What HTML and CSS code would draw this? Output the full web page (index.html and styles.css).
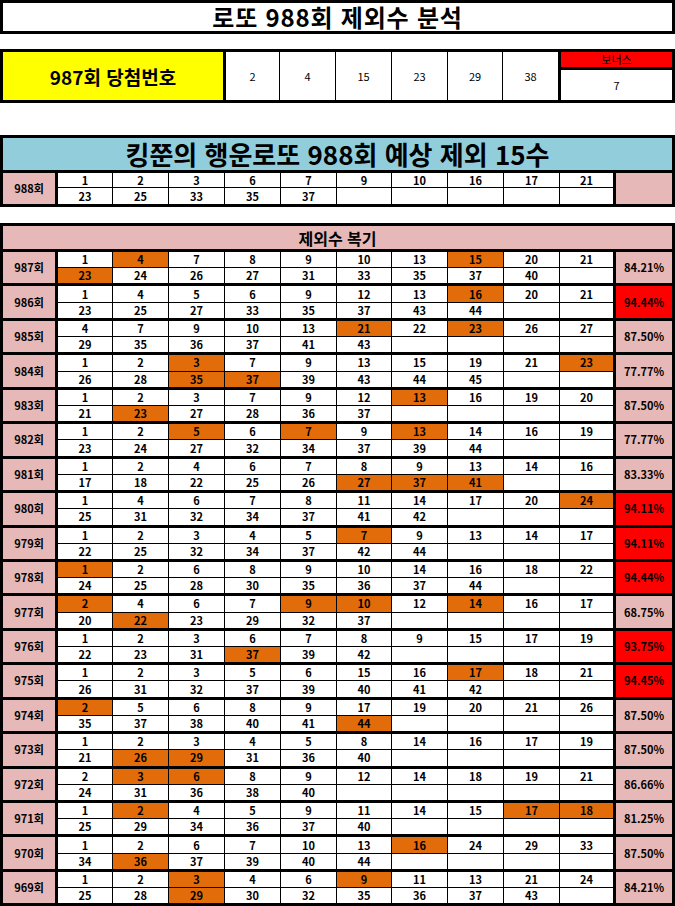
FILE: index.html
```html
<!DOCTYPE html>
<html lang="ko">
<head>
<meta charset="utf-8">
<title>로또 988회 제외수 분석</title>
<link rel="stylesheet" href="styles.css">
</head>
<body>
<div class="page">
  <div class="title">로또 988회 제외수 분석</div>

  <div class="win">
    <div class="win-label">987회 당첨번호</div>
    <div class="win-n first">2</div>
    <div class="win-n">4</div>
    <div class="win-n">15</div>
    <div class="win-n">23</div>
    <div class="win-n">29</div>
    <div class="win-n">38</div>
    <div class="bonus">
      <div class="bonus-h">보너스</div>
      <div class="bonus-v">7</div>
    </div>
  </div>

  <div class="sec">
    <div class="sec-h blue">킹쭌의 행운로또 988회 예상 제외 15수</div>
    <div class="blk b988">
      <div class="lbl">988회</div>
      <div class="n">1</div><div class="n">2</div><div class="n">3</div><div class="n">6</div><div class="n">7</div><div class="n">9</div><div class="n">10</div><div class="n">16</div><div class="n">17</div><div class="n">21</div>
      <div class="pct"></div>
      <div class="n">23</div><div class="n">25</div><div class="n">33</div><div class="n">35</div><div class="n">37</div><div class="n"></div><div class="n"></div><div class="n"></div><div class="n"></div><div class="n"></div>
    </div>
  </div>

  <div class="sec sec2">
    <div class="sec-h pink">제외수 복기</div>

    <div class="blk">
      <div class="lbl">987회</div>
      <div class="n">1</div><div class="n o">4</div><div class="n">7</div><div class="n">8</div><div class="n">9</div><div class="n">10</div><div class="n">13</div><div class="n o">15</div><div class="n">20</div><div class="n">21</div>
      <div class="pct">84.21%</div>
      <div class="n o">23</div><div class="n">24</div><div class="n">26</div><div class="n">27</div><div class="n">31</div><div class="n">33</div><div class="n">35</div><div class="n">37</div><div class="n">40</div><div class="n"></div>
    </div>

    <div class="blk">
      <div class="lbl">986회</div>
      <div class="n">1</div><div class="n">4</div><div class="n">5</div><div class="n">6</div><div class="n">9</div><div class="n">12</div><div class="n">13</div><div class="n o">16</div><div class="n">20</div><div class="n">21</div>
      <div class="pct red">94.44%</div>
      <div class="n">23</div><div class="n">25</div><div class="n">27</div><div class="n">33</div><div class="n">35</div><div class="n">37</div><div class="n">43</div><div class="n">44</div><div class="n"></div><div class="n"></div>
    </div>

    <div class="blk">
      <div class="lbl">985회</div>
      <div class="n">4</div><div class="n">7</div><div class="n">9</div><div class="n">10</div><div class="n">13</div><div class="n o">21</div><div class="n">22</div><div class="n o">23</div><div class="n">26</div><div class="n">27</div>
      <div class="pct">87.50%</div>
      <div class="n">29</div><div class="n">35</div><div class="n">36</div><div class="n">37</div><div class="n">41</div><div class="n">43</div><div class="n"></div><div class="n"></div><div class="n"></div><div class="n"></div>
    </div>

    <div class="blk">
      <div class="lbl">984회</div>
      <div class="n">1</div><div class="n">2</div><div class="n o">3</div><div class="n">7</div><div class="n">9</div><div class="n">13</div><div class="n">15</div><div class="n">19</div><div class="n">21</div><div class="n o">23</div>
      <div class="pct">77.77%</div>
      <div class="n">26</div><div class="n">28</div><div class="n o">35</div><div class="n o">37</div><div class="n">39</div><div class="n">43</div><div class="n">44</div><div class="n">45</div><div class="n"></div><div class="n"></div>
    </div>

    <div class="blk">
      <div class="lbl">983회</div>
      <div class="n">1</div><div class="n">2</div><div class="n">3</div><div class="n">7</div><div class="n">9</div><div class="n">12</div><div class="n o">13</div><div class="n">16</div><div class="n">19</div><div class="n">20</div>
      <div class="pct">87.50%</div>
      <div class="n">21</div><div class="n o">23</div><div class="n">27</div><div class="n">28</div><div class="n">36</div><div class="n">37</div><div class="n"></div><div class="n"></div><div class="n"></div><div class="n"></div>
    </div>

    <div class="blk">
      <div class="lbl">982회</div>
      <div class="n">1</div><div class="n">2</div><div class="n o">5</div><div class="n">6</div><div class="n o">7</div><div class="n">9</div><div class="n o">13</div><div class="n">14</div><div class="n">16</div><div class="n">19</div>
      <div class="pct">77.77%</div>
      <div class="n">23</div><div class="n">24</div><div class="n">27</div><div class="n">32</div><div class="n">34</div><div class="n">37</div><div class="n">39</div><div class="n">44</div><div class="n"></div><div class="n"></div>
    </div>

    <div class="blk">
      <div class="lbl">981회</div>
      <div class="n">1</div><div class="n">2</div><div class="n">4</div><div class="n">6</div><div class="n">7</div><div class="n">8</div><div class="n">9</div><div class="n">13</div><div class="n">14</div><div class="n">16</div>
      <div class="pct">83.33%</div>
      <div class="n">17</div><div class="n">18</div><div class="n">22</div><div class="n">25</div><div class="n">26</div><div class="n o">27</div><div class="n o">37</div><div class="n o">41</div><div class="n"></div><div class="n"></div>
    </div>

    <div class="blk">
      <div class="lbl">980회</div>
      <div class="n">1</div><div class="n">4</div><div class="n">6</div><div class="n">7</div><div class="n">8</div><div class="n">11</div><div class="n">14</div><div class="n">17</div><div class="n">20</div><div class="n o">24</div>
      <div class="pct red">94.11%</div>
      <div class="n">25</div><div class="n">31</div><div class="n">32</div><div class="n">34</div><div class="n">37</div><div class="n">41</div><div class="n">42</div><div class="n"></div><div class="n"></div><div class="n"></div>
    </div>

    <div class="blk">
      <div class="lbl">979회</div>
      <div class="n">1</div><div class="n">2</div><div class="n">3</div><div class="n">4</div><div class="n">5</div><div class="n o">7</div><div class="n">9</div><div class="n">13</div><div class="n">14</div><div class="n">17</div>
      <div class="pct red">94.11%</div>
      <div class="n">22</div><div class="n">25</div><div class="n">32</div><div class="n">34</div><div class="n">37</div><div class="n">42</div><div class="n">44</div><div class="n"></div><div class="n"></div><div class="n"></div>
    </div>

    <div class="blk">
      <div class="lbl">978회</div>
      <div class="n o">1</div><div class="n">2</div><div class="n">6</div><div class="n">8</div><div class="n">9</div><div class="n">10</div><div class="n">14</div><div class="n">16</div><div class="n">18</div><div class="n">22</div>
      <div class="pct red">94.44%</div>
      <div class="n">24</div><div class="n">25</div><div class="n">28</div><div class="n">30</div><div class="n">35</div><div class="n">36</div><div class="n">37</div><div class="n">44</div><div class="n"></div><div class="n"></div>
    </div>

    <div class="blk">
      <div class="lbl">977회</div>
      <div class="n o">2</div><div class="n">4</div><div class="n">6</div><div class="n">7</div><div class="n o">9</div><div class="n o">10</div><div class="n">12</div><div class="n o">14</div><div class="n">16</div><div class="n">17</div>
      <div class="pct">68.75%</div>
      <div class="n">20</div><div class="n o">22</div><div class="n">23</div><div class="n">29</div><div class="n">32</div><div class="n">37</div><div class="n"></div><div class="n"></div><div class="n"></div><div class="n"></div>
    </div>

    <div class="blk">
      <div class="lbl">976회</div>
      <div class="n">1</div><div class="n">2</div><div class="n">3</div><div class="n">6</div><div class="n">7</div><div class="n">8</div><div class="n">9</div><div class="n">15</div><div class="n">17</div><div class="n">19</div>
      <div class="pct red">93.75%</div>
      <div class="n">22</div><div class="n">23</div><div class="n">31</div><div class="n o">37</div><div class="n">39</div><div class="n">42</div><div class="n"></div><div class="n"></div><div class="n"></div><div class="n"></div>
    </div>

    <div class="blk">
      <div class="lbl">975회</div>
      <div class="n">1</div><div class="n">2</div><div class="n">3</div><div class="n">5</div><div class="n">6</div><div class="n">15</div><div class="n">16</div><div class="n o">17</div><div class="n">18</div><div class="n">21</div>
      <div class="pct red">94.45%</div>
      <div class="n">26</div><div class="n">31</div><div class="n">32</div><div class="n">37</div><div class="n">39</div><div class="n">40</div><div class="n">41</div><div class="n">42</div><div class="n"></div><div class="n"></div>
    </div>

    <div class="blk">
      <div class="lbl">974회</div>
      <div class="n o">2</div><div class="n">5</div><div class="n">6</div><div class="n">8</div><div class="n">9</div><div class="n">17</div><div class="n">19</div><div class="n">20</div><div class="n">21</div><div class="n">26</div>
      <div class="pct">87.50%</div>
      <div class="n">35</div><div class="n">37</div><div class="n">38</div><div class="n">40</div><div class="n">41</div><div class="n o">44</div><div class="n"></div><div class="n"></div><div class="n"></div><div class="n"></div>
    </div>

    <div class="blk">
      <div class="lbl">973회</div>
      <div class="n">1</div><div class="n">2</div><div class="n">3</div><div class="n">4</div><div class="n">5</div><div class="n">8</div><div class="n">14</div><div class="n">16</div><div class="n">17</div><div class="n">19</div>
      <div class="pct">87.50%</div>
      <div class="n">21</div><div class="n o">26</div><div class="n o">29</div><div class="n">31</div><div class="n">36</div><div class="n">40</div><div class="n"></div><div class="n"></div><div class="n"></div><div class="n"></div>
    </div>

    <div class="blk">
      <div class="lbl">972회</div>
      <div class="n">2</div><div class="n o">3</div><div class="n o">6</div><div class="n">8</div><div class="n">9</div><div class="n">12</div><div class="n">14</div><div class="n">18</div><div class="n">19</div><div class="n">21</div>
      <div class="pct">86.66%</div>
      <div class="n">24</div><div class="n">31</div><div class="n">36</div><div class="n">38</div><div class="n">40</div><div class="n"></div><div class="n"></div><div class="n"></div><div class="n"></div><div class="n"></div>
    </div>

    <div class="blk">
      <div class="lbl">971회</div>
      <div class="n">1</div><div class="n o">2</div><div class="n">4</div><div class="n">5</div><div class="n">9</div><div class="n">11</div><div class="n">14</div><div class="n">15</div><div class="n o">17</div><div class="n o">18</div>
      <div class="pct">81.25%</div>
      <div class="n">25</div><div class="n">29</div><div class="n">34</div><div class="n">36</div><div class="n">37</div><div class="n">40</div><div class="n"></div><div class="n"></div><div class="n"></div><div class="n"></div>
    </div>

    <div class="blk">
      <div class="lbl">970회</div>
      <div class="n">1</div><div class="n">2</div><div class="n">6</div><div class="n">7</div><div class="n">10</div><div class="n">13</div><div class="n o">16</div><div class="n">24</div><div class="n">29</div><div class="n">33</div>
      <div class="pct">87.50%</div>
      <div class="n">34</div><div class="n o">36</div><div class="n">37</div><div class="n">39</div><div class="n">40</div><div class="n">44</div><div class="n"></div><div class="n"></div><div class="n"></div><div class="n"></div>
    </div>

    <div class="blk">
      <div class="lbl">969회</div>
      <div class="n">1</div><div class="n">2</div><div class="n o">3</div><div class="n">4</div><div class="n">6</div><div class="n o">9</div><div class="n">11</div><div class="n">13</div><div class="n">21</div><div class="n">24</div>
      <div class="pct">84.21%</div>
      <div class="n">25</div><div class="n">28</div><div class="n o">29</div><div class="n">30</div><div class="n">32</div><div class="n">35</div><div class="n">36</div><div class="n">37</div><div class="n">43</div><div class="n"></div>
    </div>
  </div>
</div>
</body>
</html>
```

FILE: styles.css
```css
* { box-sizing: border-box; }

html, body {
  margin: 0;
  padding: 0;
  background: #fff;
}

body {
  font-family: "Noto Sans CJK KR", "Noto Sans", sans-serif;
  color: #000;
  width: 675px;
  height: 906px;
  overflow: hidden;
}

.page {
  width: 675px;
}

.title {
  height: 34px;
  border: 3px solid #000;
  display: flex;
  align-items: center;
  justify-content: center;
  font-size: 24px;
  letter-spacing: 0.8px;
  font-weight: 700;
  line-height: 1;
}

/* winning numbers */
.win {
  margin-top: 15px;
  height: 54px;
  border: 3px solid #000;
  display: grid;
  grid-template-columns: 220px 56px 56px 56px 56px 55px 56px 114px;
}

.win-label {
  background: #ffff00;
  display: flex;
  align-items: center;
  justify-content: center;
  font-size: 19px;
  font-weight: 700;
  line-height: 1;
}

.win-n {
  border-left: 1px solid #000;
  display: flex;
  align-items: center;
  justify-content: center;
  font-size: 11px;
  line-height: 1;
}

.win-n.first { border-left-width: 3px; }

.bonus {
  border-left: 3px solid #000;
  display: flex;
  flex-direction: column;
}

.bonus-h {
  height: 18px;
  background: #ff0000;
  border-bottom: 3px solid #000;
  display: flex;
  align-items: center;
  justify-content: center;
  font-size: 11px;
  line-height: 1;
}

.bonus-v {
  flex: 1;
  display: flex;
  align-items: center;
  justify-content: center;
  font-size: 11px;
  line-height: 1;
}

/* sections */
.sec {
  margin-top: 32px;
  border: 3px solid #000;
}

.sec2 {
  margin-top: 16px;
}

.sec-h {
  display: flex;
  align-items: center;
  justify-content: center;
  font-weight: 700;
  line-height: 1;
}

.sec-h.blue {
  height: 35px;
  background: #92cddc;
  border-bottom: 3px solid #000;
  font-size: 26px;
}

.sec-h.pink {
  height: 23px;
  background: #e6b8b7;
  font-size: 16px;
}

/* row blocks */
.blk {
  display: grid;
  grid-template-columns: 55px 55px 56px 56px 56px 56px 55px 56px 56px 56px 56px 56px;
  grid-template-rows: 16.2px 15.25px;
  border-top: 3px solid #000;
}

.blk.b988 {
  border-top: none;
  grid-template-rows: 15px 16px;
}

.lbl {
  grid-row: span 2;
  background: #e6b8b7;
  border-right: 3px solid #000;
  display: flex;
  align-items: center;
  justify-content: center;
  font-size: 11px;
  font-weight: 700;
  line-height: 1;
}

.n {
  border-right: 1px solid #000;
  display: flex;
  align-items: center;
  justify-content: center;
  font-size: 11px;
  font-weight: 700;
  line-height: 1;
  background: #fff;
}

.blk > .n:nth-child(-n+11) { border-bottom: 1px solid #000; }
.blk > .n:nth-child(11),
.blk > .n:nth-child(22) { border-right-width: 3px; }

.n.o { background: #e26b0a; }

.pct {
  grid-row: span 2;
  background: #e6b8b7;
  display: flex;
  align-items: center;
  justify-content: center;
  font-size: 11px;
  font-weight: 700;
  line-height: 1;
}

.pct.red { background: #ff0000; }
```
